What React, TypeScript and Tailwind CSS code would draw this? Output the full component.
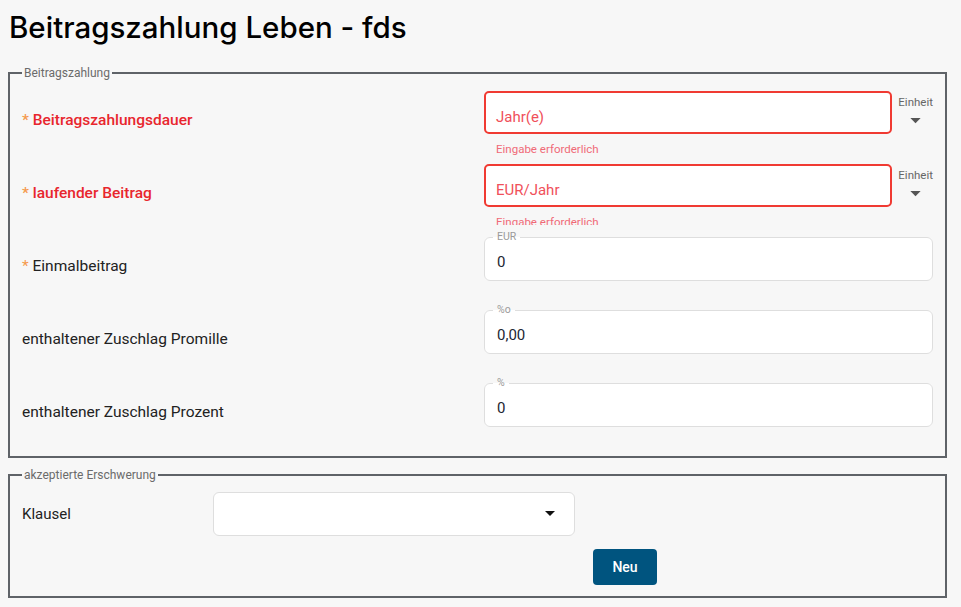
import React from "react";

const body = { fontFamily: "Roboto, 'Liberation Sans', sans-serif" };

function Caret({ className }: { className?: string }) {
  return (
    <svg width="12" height="7" viewBox="0 0 12 7" className={className}>
      <path d="M0 0 L12 0 L6 6 Z" fill="currentColor" />
    </svg>
  );
}

function ErrorRow({ label, unit, clip }: { label: string; unit: string; clip?: boolean }) {
  return (
    <div className="flex h-[73px]">
      <div className="flex flex-1 items-center pt-[2px]">
        <span className="text-[15.5px] font-medium text-[#e8262d]">
          <span className="text-[#f59a4e]">*</span> {label}
        </span>
      </div>
      <div className="flex w-[449px] pt-[8px]">
        <div className={`flex flex-1 flex-col ${clip ? "h-[61px] overflow-hidden" : ""}`}>
          <div className="flex h-[43px] shrink-0 items-center rounded-[5px] border-2 border-[#f03a32] bg-white px-[10px] pt-[10px] text-[15px] text-[#f0505a]">
            {unit}
          </div>
          <div className="mt-[8px] pl-[12px] text-[11.5px] leading-[14px] text-[#f06a78]">Eingabe erforderlich</div>
        </div>
        <div className="flex w-[41px] flex-col items-end pt-[4px]">
          <span className="text-[11.5px] leading-[14px] text-[#666]">Einheit</span>
          <Caret className="mr-[12px] mt-[9px] h-[6px] w-[11px] text-[#555]" />
        </div>
      </div>
    </div>
  );
}

function OutlinedRow({ label, star, unit, value }: { label: string; star?: boolean; unit: string; value: string }) {
  return (
    <div className="flex h-[73px]">
      <div className="flex flex-1 items-center pt-[2px]">
        <span className="text-[15.5px] text-[#222]">
          {star && <span className="text-[#f59a4e]">* </span>}
          {label}
        </span>
      </div>
      <div className="w-[449px] pt-[2px]">
        <fieldset className="h-[50px] rounded-[6px] border border-[#dedede] bg-white px-[8px]">
          <legend className="ml-[0px] px-[4px] text-[10.5px] leading-[12px] text-[#9a9a9a]">{unit}</legend>
          <div className="pl-[4px] pt-[9px] text-[15px] leading-[20px] text-[#1c2633]">{value}</div>
        </fieldset>
      </div>
    </div>
  );
}

export default function App() {
  return (
    <div className="min-h-screen bg-[#f7f7f7] px-[8px] pb-[10px] pt-[9px]" style={body}>
      <h1
        className="pl-[1px] text-[29.5px] font-medium leading-[36px] text-black"
        style={{ fontFamily: "Inter, 'Noto Sans', sans-serif" }}
      >
        Beitragszahlung Leben - fds
      </h1>
      <fieldset className="mt-[21px] w-[939px] border-2 border-[#5f6368] px-[12px] pb-[8px]">
        <legend className="px-[2px] text-[12px] leading-[14px] text-[#6b6b6b]">Beitragszahlung</legend>
        <div className="pt-[3px]">
          <ErrorRow label="Beitragszahlungsdauer" unit="Jahr(e)" />
          <ErrorRow label="laufender Beitrag" unit="EUR/Jahr" clip />
          <OutlinedRow label="Einmalbeitrag" star unit="EUR" value="0" />
          <OutlinedRow label="enthaltener Zuschlag Promille" unit="%o" value="0,00" />
          <OutlinedRow label="enthaltener Zuschlag Prozent" unit="%" value="0" />
        </div>
      </fieldset>
      <fieldset className="mt-[10px] w-[939px] border-2 border-[#5f6368] px-[12px] pb-[11px]">
        <legend className="px-[2px] text-[12px] leading-[14px] text-[#6b6b6b]">akzeptierte Erschwerung</legend>
        <div className="flex items-center pt-[10px]">
          <div className="w-[191px] text-[15px] text-[#222]">Klausel</div>
          <div className="flex h-[44px] w-[362px] items-center justify-end rounded-[6px] border border-[#dedede] bg-white pr-[19px]">
            <Caret className="h-[6px] w-[10px] text-[#111]" />
          </div>
        </div>
        <div className="mt-[13px] pl-[571px]">
          <button className="h-[36px] w-[64px] rounded-[4px] bg-[#00547f] text-[14px] font-medium text-white">Neu</button>
        </div>
      </fieldset>
    </div>
  );
}
